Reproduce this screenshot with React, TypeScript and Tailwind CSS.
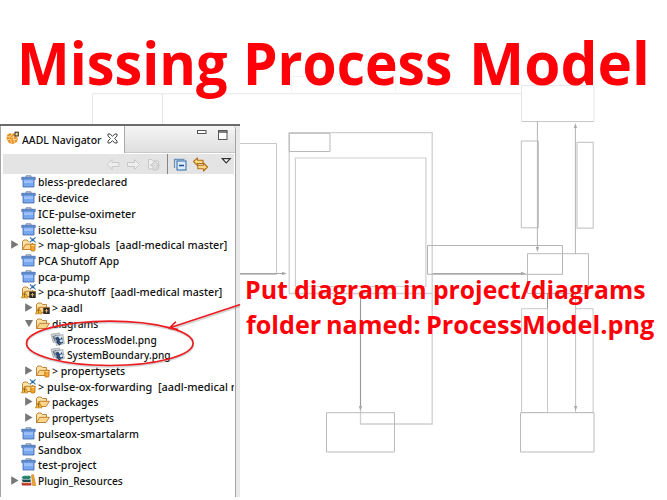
import React, { useLayoutEffect, useRef } from "react";

/* A run of text that is condensed or stretched to an exact width. */
function Fit({ text, width, className = "" }: { text: string; width: number; className?: string }) {
  const ref = useRef<HTMLSpanElement>(null);
  useLayoutEffect(() => {
    const el = ref.current;
    if (el) el.style.transform = `scaleX(${width / el.offsetWidth})`;
  }, [text, width]);
  return (
    <span className={`block shrink-0 ${className}`} style={{ width }}>
      <span ref={ref} className="inline-block origin-left whitespace-pre">{text}</span>
    </span>
  );
}

type Kind = "project" | "sharedProject" | "sharedWarn" | "sharedWarnDark" | "folder" | "folderWarn" | "folderWarnDark" | "folderShared" | "image" | "books";
type Row = { text: string; width: number; kind: Kind; level?: number; arrow?: "right" | "down" };

const rows: Row[] = [
  { text: "bless-predeclared", width: 89, kind: "project" },
  { text: "ice-device", width: 51, kind: "project" },
  { text: "ICE-pulse-oximeter", width: 98, kind: "project" },
  { text: "isolette-ksu", width: 59, kind: "project" },
  { text: "> map-globals  [aadl-medical master]", width: 189, kind: "sharedProject", arrow: "right" },
  { text: "PCA Shutoff App", width: 81, kind: "project" },
  { text: "pca-pump", width: 52, kind: "project" },
  { text: "> pca-shutoff  [aadl-medical master]", width: 184, kind: "sharedWarnDark" },
  { text: "> aadl", width: 31, kind: "folderWarnDark", level: 1, arrow: "right" },
  { text: "diagrams", width: 46, kind: "folder", level: 1, arrow: "down" },
  { text: "ProcessModel.png", width: 90, kind: "image", level: 2 },
  { text: "SystemBoundary.png", width: 104, kind: "image", level: 2 },
  { text: "> propertysets", width: 73, kind: "folderShared", level: 1, arrow: "right" },
  { text: "> pulse-ox-forwarding  [aadl-medical m", width: 203, kind: "sharedWarn" },
  { text: "packages", width: 46, kind: "folderWarn", level: 1, arrow: "right" },
  { text: "propertysets", width: 62, kind: "folder", level: 1, arrow: "right" },
  { text: "pulseox-smartalarm", width: 101, kind: "project" },
  { text: "Sandbox", width: 43, kind: "project" },
  { text: "test-project", width: 59, kind: "project" },
  { text: "Plugin_Resources", width: 85, kind: "books", arrow: "right" },
];

const Folder = () => (
  <g stroke="#b8772a" strokeWidth="0.9" strokeLinejoin="round">
    <path d="M1.5 12.5V4.5L3 3H6L7.5 4.5H11.5V7" fill="#fbe3a6" />
    <path d="M1.5 12.5L4.7 7.3H14.5L11 12.5Z" fill="#fdd588" />
  </g>
);
const Warn = () => (
  <g>
    <path d="M3.7 7.3L7 13.8H0.5Z" fill="#f8bd42" stroke="#b97b17" strokeWidth="0.8" />
    <path d="M3.7 9.5V11.5M3.7 12.3V13" stroke="#3c2a08" strokeWidth="0.9" />
  </g>
);
const Cylinder = () => (
  <g>
    <rect x="9.8" y="7.3" width="4.2" height="6.7" rx="1.2" fill="#f7a72d" stroke="#bd6806" strokeWidth="0.8" />
    <path d="M10.4 8.3H13.4" stroke="#ffe8a5" />
  </g>
);
const Dark = () => (
  <g>
    <rect x="8.3" y="7.7" width="6.4" height="6.3" fill="#2b2622" />
    <path d="M11.5 9V12.7M9.7 10.8H13.3" stroke="#d9b06b" strokeWidth="1.1" />
  </g>
);
const Nature = () => (
  <g>
    <path d="M8.5 -0.5H15V6H8.5Z" fill="#fff" />
    <path d="M9 0.3L10.5 2H13L14.5 0.3M9 5.5L10.5 3.7H13L14.5 5.5M10.5 2L13 3.7M13 2L10.5 3.7" stroke="#2c6da5" strokeWidth="1.1" fill="none" />
  </g>
);

function RowIcon({ kind }: { kind: Kind }) {
  const shared = kind.startsWith("shared");
  const folder = kind.startsWith("folder");
  return (
    <svg className="h-[15px] w-[15px] shrink-0 overflow-visible" viewBox="0 0 15 15">
      {kind === "project" && (
        <g>
          <path d="M5 3V1.8H10V3" fill="#d3ddea" stroke="#71869f" strokeWidth="0.9" />
          <path d="M0.8 3.3H14.2V5.6H13V13H2V5.6H0.8Z" fill="#78a8ee" stroke="#3c63a8" strokeWidth="0.8" />
          <path d="M1.6 3.9H13.4V5.4H1.6Z" fill="#5c87c6" />
          <path d="M3 6.2H12V9H3Z" fill="#9cc0fa" />
        </g>
      )}
      {(shared || folder) && <Folder />}
      {kind.includes("Warn") && <Warn />}
      {shared && <Nature />}
      {(kind === "sharedProject" || kind === "sharedWarn" || kind === "folderShared") && <Cylinder />}
      {kind.includes("Dark") && <Dark />}
      {kind === "image" && (
        <g>
          <path d="M1 2.2L9.5 1L11 9L3.2 10.5Z" fill="#ccd1d7" stroke="#9a9fa5" strokeWidth="0.7" />
          <path d="M2.5 4.5L6 3L9 6L8 9L4.5 9Z" fill="#6d7682" />
          <path d="M4.5 4.2L12.8 2.6L14.3 11.5L6.5 13.5Z" fill="#dfe5ec" stroke="#8b929b" strokeWidth="0.7" />
          <path d="M5 6L8 4.5L10 7.3L12 5L13.2 10.8L10.5 12L7 9.5Z" fill="#294770" />
          <circle cx="11.3" cy="8.7" r="1.5" fill="#d6e7fa" />
          <path d="M6.5 9.5L10 13" stroke="#1d304e" strokeWidth="1.5" />
        </g>
      )}
      {kind === "books" && (
        <g>
          <path d="M0.5 4L3 2.8H9L10 4.7L8.5 6H2Z" fill="#27866d" />
          <path d="M0.5 6.6H9.7V9H2Z" fill="#174d50" />
          <path d="M0.5 9.6H10.3V12.6H1Z" fill="#ba3428" />
          <path d="M1.5 9.7H10" stroke="#eee1c3" strokeWidth="0.8" />
          <path d="M10.5 2L12.5 1.6L14.8 12.5H11.5Z" fill="#f1a32c" stroke="#bb731a" strokeWidth="0.5" />
        </g>
      )}
    </svg>
  );
}

function TreeRow({ row }: { row: Row }) {
  const pad = row.level === 2 ? "pl-[39px]" : row.level === 1 ? "pl-[24px]" : "pl-[10px]";
  return (
    <div className={`flex h-[15.73px] items-center overflow-hidden ${pad}`}>
      <svg className="h-[9px] w-[8px] shrink-0" viewBox="0 0 8 9">
        {row.arrow === "right" && <path d="M0.2 0.3L7.5 4.5L0.2 8.7Z" fill="#777" />}
        {row.arrow === "down" && <path d="M0 1H8L4 8.3Z" fill="#777" />}
      </svg>
      <span className="ml-[2px] flex"><RowIcon kind={row.kind} /></span>
      <Fit text={row.text} width={row.width} className="ml-[1.5px]" />
    </div>
  );
}

function Diagram() {
  return (
    <svg className="absolute inset-0 h-[500px] w-[667px]" viewBox="0 0 667 500" fill="none" stroke="#c8c8c8">
      <g stroke="#e6e6e6">
        <path d="M92.5 124V93.8H521M162.5 94V124" />
        <path d="M291.5 94V76.5H395.5V94" stroke="#f3f3f3" />
        <path d="M521.5 121V85.5H594V121" />
      </g>
      <path d="M521.5 121.5H594" />
      <path d="M239 143.5H276.5V274.5H239" />
      <path d="M239 273.5H282M432 273.5H522" stroke="#a5a5a5" />
      <path d="M289.2 293.5V132.7H432.2V424H360.5V300M289 293.5H432" stroke="#cfcfcf" strokeWidth="1.3" />
      <path d="M289.2 133.3H330V151.5H289.2Z" stroke="#b9b9b9" />
      <path d="M295.4 158H425.9V286.5H295.4Z" stroke="#cfcfcf" strokeWidth="1.2" />
      <path d="M427.5 245.5H562.5V274.3H427.5Z" stroke="#b5b5b5" />
      <path d="M527.5 293V253.7H588.5V293.5H527.5" stroke="#bcbcbc" />
      <path d="M521.3 141H538.4V227.8H521.3Z" stroke="#bdbdbd" />
      <path d="M577 142.3H593.2V228.2H577Z" stroke="#cacaca" strokeWidth="1.2" />
      <path d="M537.4 121V249M575.4 126V253.5M575.6 294V409" stroke="#b2b2b2" />
      <path d="M360.5 298V408M547.5 293V412" stroke="#999" />
      <path d="M521.6 308.7H547.5V412.5H521.6ZM575.5 308.7H593.1V412.5H575.5Z" />
      <path d="M326.5 412.7H394.5V452H326.5ZM520.5 412.7H594V452H520.5Z" stroke="#bbb" />
      <g fill="#aaa" stroke="none">
        <path d="M282 271.8L287 273.5L282 275.2ZM521 271.8L526 273.5L521 275.2Z" />
        <path d="M535.7 247L537.4 252L539.1 247ZM573.8 128L575.4 123L577 128Z" />
        <path d="M358.8 406L360.5 411L362.2 406ZM573.9 406L575.6 411L577.3 406Z" />
      </g>
    </svg>
  );
}

function Toolbar() {
  return (
    <div className="ml-[2px] flex h-[20px] w-[231px] shrink-0 items-center bg-[#e4e4e4]">
      <svg className="h-[20px] w-[231px] shrink-0" viewBox="3 154 231 20" fill="none">
        <g stroke="#c9c9c9" fill="#eee" strokeLinejoin="round">
          <path d="M107 164.5L112 159.5V162.5H119V166.5H112V169.5Z" />
          <path d="M139.5 164.5L134.5 159.5V162.5H127.5V166.5H134.5V169.5Z" />
          <path d="M148.5 169V159.5H152L153 161H158.5V169Z" />
          <path d="M155 161L159.5 165.5H157V170H153V165.5H150.5Z" fill="#ddd" />
        </g>
        <path d="M167.5 154V174" stroke="#858585" />
        <path d="M174.5 168V159.5H184.5" stroke="#6b94bd" strokeWidth="1.3" />
        <rect x="177" y="161" width="9" height="9" fill="#dceafa" stroke="#4b7fb6" strokeWidth="1.2" />
        <path d="M179 165.5H184" stroke="#174f91" strokeWidth="1.5" />
        <g fill="#f8da87" stroke="#b46f18" strokeWidth="1.1" strokeLinejoin="round">
          <path d="M193.5 161.5L197.5 157.8V160.2H203V163.5H197.5V165.5Z" />
          <path d="M207.5 167L203.5 163V165.3H197.8V168.7H203.5V171Z" />
        </g>
        <path d="M222.3 158.7H230.2L226.2 162.8Z" fill="#fff" stroke="#333" strokeWidth="1.2" />
      </svg>
    </div>
  );
}

function Navigator() {
  return (
    <section className="relative mt-[124px] flex h-[373px] w-[240px] flex-col border-t-2 border-[#6b6b6b] bg-[#e9e9e9] font-['Noto_Sans','Open_Sans',sans-serif] text-[11px] font-medium leading-[15px] text-[#111]">
      <div className="flex min-h-0 w-[236px] flex-1 flex-col overflow-hidden rounded-tr border-l border-r border-[#a4a4a4] bg-white">
        <header className="flex h-[27px] shrink-0 border-b border-[#c9c9c9] bg-gradient-to-b from-[#f6f6f6] to-[#dedede]">
          <div className="flex h-[27px] w-[124px] items-center border-r border-[#aaa] bg-white pl-[5px]">
            <svg className="mb-[3px] h-[14px] w-[13px] shrink-0" viewBox="0 0 13 14">
              <path d="M1 4L4 2L6 3L8 2L9 5L12 7L11 11L7 13L3 12L0.5 8Z" fill="#e9922a" />
              <path d="M0 5L4 6L6 3M1 9L4 8L6 12M5 7L8 5L7 9L11 8M8 9L9 12" stroke="#ffe0a0" strokeWidth="0.9" fill="none" />
              <rect x="9" y="1.2" width="3.3" height="3.8" fill="#e9db98" stroke="#332a18" />
            </svg>
            <Fit text="AADL Navigator" width={79} className="mb-[1px] ml-[3px]" />
            <svg className="mb-[3px] ml-[6px] h-[11px] w-[11px] shrink-0" viewBox="0 0 11 11">
              <path d="M1 1H3.2L5.5 3.4L7.8 1H10V3L7.6 5.5L10 8V10H7.8L5.5 7.6L3.2 10H1V8L3.4 5.5L1 3Z" fill="#fff" stroke="#444" />
            </svg>
          </div>
          <svg className="ml-auto mr-[7px] mt-[3px] h-[12px] w-[32px]" viewBox="0 0 32 12" fill="#fff" stroke="#555">
            <rect x="1.5" y="1.5" width="8.5" height="3" />
            <rect x="22.5" y="1.5" width="8.5" height="9" />
            <path d="M22 3H31.5" strokeWidth="1.7" />
          </svg>
        </header>
        <div className="h-[1px] shrink-0 bg-white" />
        <Toolbar />
        <div className="mr-[1px] overflow-hidden">
          {rows.map((row, i) => <TreeRow key={i} row={row} />)}
        </div>
      </div>
    </section>
  );
}

export default function App() {
  return (
    <main className="relative h-[500px] w-[667px] overflow-hidden bg-white">
      <Diagram />
      <h1 className="absolute left-[17px] top-[27px] flex font-['Open_Sans',sans-serif] text-[58.5px] font-bold leading-[70px] text-[#ff0008]">
        <Fit text="Missing" width={211} />
        <Fit text="Process" width={209} className="ml-[15px]" />
        <Fit text="Model" width={181} className="ml-[17px]" />
      </h1>
      <Navigator />
      <svg className="absolute inset-0 h-[500px] w-[667px]" viewBox="0 0 667 500" fill="none" strokeLinecap="round">
        <g stroke="#777" strokeOpacity="0.3" strokeWidth="2">
          <ellipse cx="110" cy="344.6" rx="83.3" ry="22.2" />
          <path d="M239 306.5L170 329.5" />
        </g>
        <g stroke="#ed1c20" strokeWidth="1.6">
          <ellipse cx="109.8" cy="343.3" rx="83.3" ry="22.2" />
          <path d="M239.5 304.8L170 327.8M175.5 322.2L169.5 328L177.5 329.4" />
        </g>
      </svg>
      <div className="absolute left-[245px] top-[272px] font-['Open_Sans',sans-serif] text-[25.5px] font-bold leading-[35px] text-[#ff0008]">
        <div className="flex">
          <Fit text="Put" width={43} />
          <Fit text="diagram" width={104} className="ml-[6px]" />
          <Fit text="in" width={24} className="ml-[5px]" />
          <Fit text="project/diagrams" width={213} className="ml-[6px]" />
        </div>
        <div className="flex">
          <Fit text="folder" width={75} className="ml-[1px]" />
          <Fit text="named:" width={95} className="ml-[5px]" />
          <Fit text="ProcessModel.png" width={228} className="ml-[5px]" />
        </div>
      </div>
    </main>
  );
}
